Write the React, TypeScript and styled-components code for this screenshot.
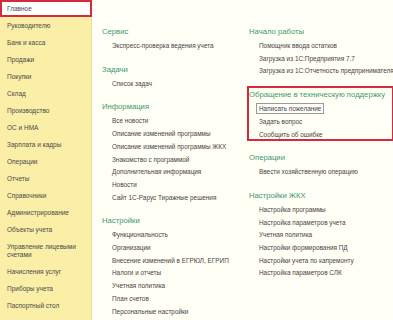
import React from "react";
import styled, { createGlobalStyle, css } from "styled-components";

const Global = createGlobalStyle`
  html, body { margin: 0; padding: 0; }
  body {
    width: 393px;
    height: 320px;
    overflow: hidden;
    background: #fffff6;
    font-family: "Liberation Sans", Arial, sans-serif;
  }
`;

const Page = styled.div`
  display: flex;
  width: 393px;
  height: 320px;
  overflow: hidden;
`;

const Sidebar = styled.nav`
  width: 92px;
  flex: none;
  box-sizing: border-box;
  background: #fbeea6;
  border-right: 1px solid #eadc95;
  display: flex;
  flex-direction: column;
`;

const NavItem = styled.div<{ $active?: boolean }>`
  box-sizing: border-box;
  padding: 4.5px 4px 4.5px 7px;
  font-size: 6.5px;
  line-height: 8px;
  color: #4a4a4a;
  ${(p) =>
    p.$active &&
    css`
      background: #ffffff;
      border: 2px solid #d42a3c;
      margin-right: -1px;
      padding: 2.5px 2px 2.5px 5px;
    `}
`;

const Main = styled.main`
  flex: 1;
  display: grid;
  grid-template-columns: 147px 1fr;
  align-content: start;
  padding: 25px 10px 0 10px;
`;

const Column = styled.div`
  display: flex;
  flex-direction: column;
  gap: 10px;
`;

const Group = styled.section`
  position: relative;
  display: flex;
  flex-direction: column;
`;

const Heading = styled.div`
  font-size: 7.7px;
  line-height: 14px;
  color: #3d9a6a;
  margin-bottom: 1px;
  white-space: nowrap;
`;

const Item = styled.div`
  font-size: 6.4px;
  line-height: 12.7px;
  padding-left: 10px;
  color: #454545;
  white-space: nowrap;
`;

const Focused = styled.span`
  background: #ffffff;
  outline: 1px solid #9a9a9a;
  outline-offset: 1px;
  padding: 0 1px;
  margin-left: -1px;
`;

const Highlight = styled.div`
  position: absolute;
  left: -2px;
  right: 0;
  top: -2px;
  bottom: 0;
  border: 2px solid #d42a3c;
  pointer-events: none;
`;

type G = { title: string; items: string[]; focus?: number; highlight?: boolean };

const nav = [
  "Главное",
  "Руководителю",
  "Банк и касса",
  "Продажи",
  "Покупки",
  "Склад",
  "Производство",
  "ОС и НМА",
  "Зарплата и кадры",
  "Операции",
  "Отчеты",
  "Справочники",
  "Администрирование",
  "Объекты учета",
  "Управление лицевыми счетами",
  "Начисления услуг",
  "Приборы учета",
  "Паспортный стол",
  "Дополнительно",
];

const col1: G[] = [
  { title: "Сервис", items: ["Экспресс-проверка ведения учета"] },
  { title: "Задачи", items: ["Список задач"] },
  {
    title: "Информация",
    items: [
      "Все новости",
      "Описание изменений программы",
      "Описание изменений программы ЖКХ",
      "Знакомство с программой",
      "Дополнительная информация",
      "Новости",
      "Сайт 1С-Рарус Тиражные решения",
    ],
  },
  {
    title: "Настройки",
    items: [
      "Функциональность",
      "Организации",
      "Внесение изменений в ЕГРЮЛ, ЕГРИП",
      "Налоги и отчеты",
      "Учетная политика",
      "План счетов",
      "Персональные настройки",
    ],
  },
];

const col2: G[] = [
  {
    title: "Начало работы",
    items: [
      "Помощник ввода остатков",
      "Загрузка из 1С:Предприятия 7.7",
      "Загрузка из 1С:Отчетность предпринимателя",
    ],
  },
  {
    title: "Обращение в техническую поддержку",
    items: ["Написать пожелание", "Задать вопрос", "Сообщить об ошибке"],
    focus: 0,
    highlight: true,
  },
  { title: "Операции", items: ["Ввести хозяйственную операцию"] },
  {
    title: "Настройки ЖКХ",
    items: [
      "Настройка программы",
      "Настройка параметров учета",
      "Учетная политика",
      "Настройки формирования ПД",
      "Настройки учета по капремонту",
      "Настройка параметров СЛК",
    ],
  },
];

function renderColumn(groups: G[]) {
  return (
    <Column>
      {groups.map((g) => (
        <Group key={g.title}>
          <Heading>{g.title}</Heading>
          {g.items.map((it, i) => (
            <Item key={it}>{g.focus === i ? <Focused>{it}</Focused> : it}</Item>
          ))}
          {g.highlight && <Highlight />}
        </Group>
      ))}
    </Column>
  );
}

export default function App() {
  return (
    <>
      <Global />
      <Page>
        <Sidebar>
          {nav.map((n, i) => (
            <NavItem key={n} $active={i === 0}>
              {n}
            </NavItem>
          ))}
        </Sidebar>
        <Main>
          {renderColumn(col1)}
          {renderColumn(col2)}
        </Main>
      </Page>
    </>
  );
}
